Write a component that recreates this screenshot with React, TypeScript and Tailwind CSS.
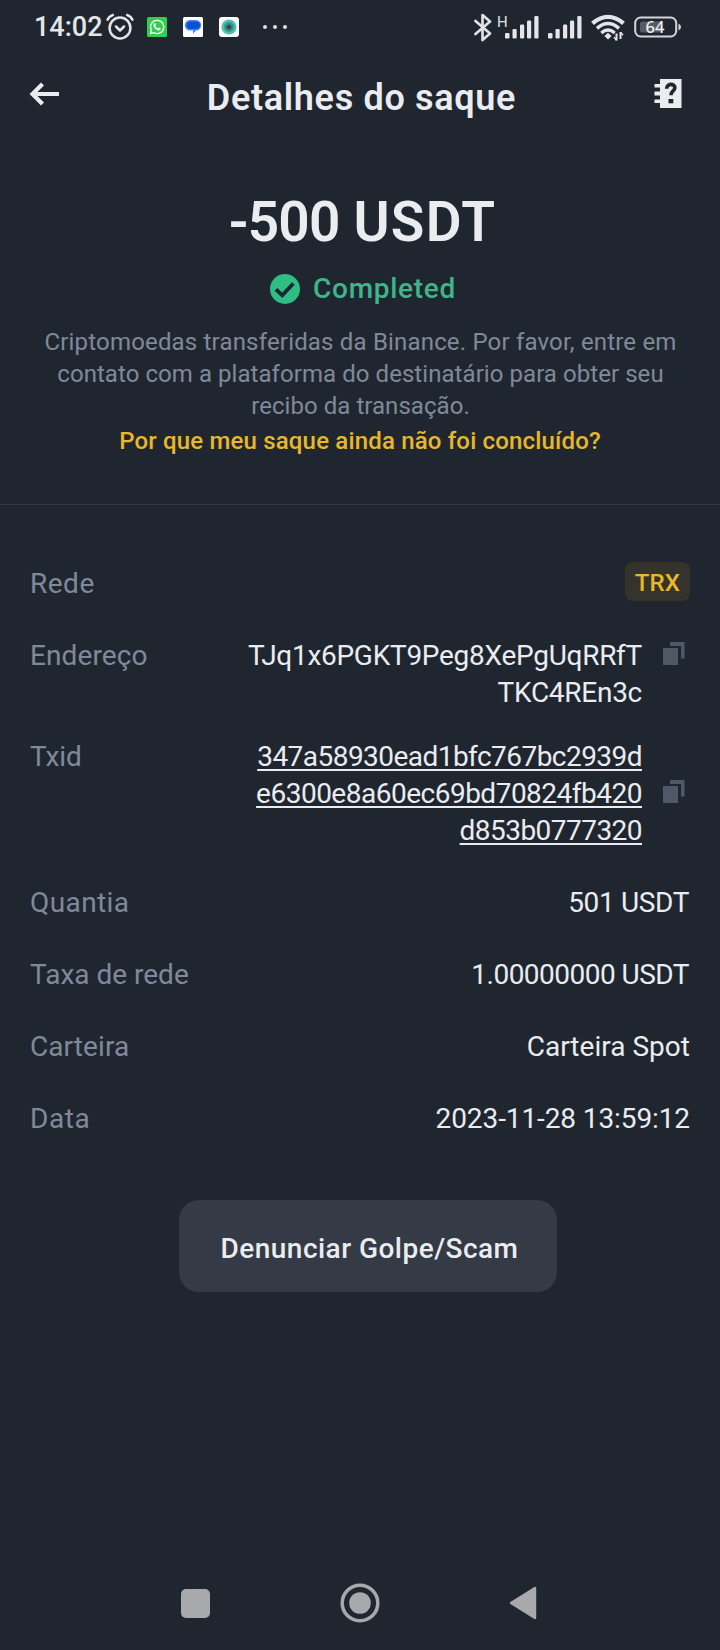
import React from "react";

function AlarmIcon() {
  return (
    <svg className="ml-[7px] h-7 w-7 shrink-0" viewBox="0 0 28 28" fill="none" stroke="#e4e5e8" strokeWidth="2.5" strokeLinecap="round">
      <circle cx="14" cy="15" r="10.4" />
      <path d="M10 13.5l4 4 4-4" strokeLinejoin="round" />
      <path d="M1.600 6.600Q3.200 3.400 6.800 2M26.400 6.600Q24.800 3.400 21.200 2" />
    </svg>
  );
}

function WhatsAppIcon() {
  return (
    <svg className="ml-[13px] h-5 w-5 shrink-0" viewBox="0 0 20 20">
      <rect width="20" height="20" rx="1.5" fill="#31ce51" />
      <path d="M3.4 16.7l1-3.5a6.6 6.6 0 1 1 2.5 2.5z" fill="none" stroke="#f4fff5" strokeWidth="1.3" strokeLinejoin="round" />
      <path d="M7.1 6.3c.4-.4 1-.3 1.2.1l.6 1.4c.1.4-.5.9-.6 1.2.5 1.1 1.4 1.9 2.5 2.4.4-.1.8-.9 1.2-.8l1.4.7c.6.3.2 1.4-.4 1.8-1.5.8-3.5-.1-4.7-1.3C7 10.6 5.8 8 7.1 6.3z" fill="#f4fff5" />
    </svg>
  );
}

function MessagesIcon() {
  return (
    <svg className="ml-4 h-5 w-5 shrink-0" viewBox="0 0 20 20">
      <rect width="20" height="20" rx="1.5" fill="#fff" />
      <path d="M7 3h6a4.8 4.8 0 0 1 0 10.5l-3 3.3V13.500H7A4.800 4.800 0 0 1 7 3z" fill="#4387f5" />
      <rect x="3.6" y="4.500" width="13.4" height="7.500" rx="3.700" fill="#0753d0" />
    </svg>
  );
}

function CameraIcon() {
  return (
    <svg className="ml-4 h-5 w-5 shrink-0" viewBox="0 0 20 20">
      <rect width="20" height="20" rx="3" fill="#fbfefd" />
      <circle cx="10" cy="10" r="7.6" fill="#55beb3" />
      <circle cx="10" cy="10" r="5" fill="#2f9990" />
      <circle cx="10" cy="10" r="2.6" fill="#285c60" />
      <circle cx="10" cy="10" r="1.4" fill="#5b3033" />
    </svg>
  );
}

function DotsIcon() {
  return (
    <svg className="ml-[23px] h-5 w-[26px] shrink-0" viewBox="0 0 26 20" fill="#dfe1e5">
      <circle cx="3" cy="10" r="2" />
      <circle cx="13" cy="10" r="2" />
      <circle cx="23" cy="10" r="2" />
    </svg>
  );
}

function BluetoothIcon() {
  return (
    <svg className="h-[29px] w-[18px] shrink-0" viewBox="0 0 18 28" fill="none" stroke="#dfe1e5" strokeWidth="2.7" strokeLinejoin="round" strokeLinecap="round">
      <path d="M1.5 7.5L16 20l-7.500 6.500v-25L16 8 1.500 20.500" />
    </svg>
  );
}

function SignalIcon() {
  return (
    <svg className="h-[23px] w-[34px] shrink-0" viewBox="0 0 34 23" fill="#e4e5e8">
      <rect x="0" y="17" width="4.5" height="5.5" rx="1.2" />
      <rect x="7.5" y="13" width="4.2" height="9.5" rx="1.2" />
      <rect x="15" y="8.5" width="4.2" height="14" rx="1.2" />
      <rect x="22" y="4.5" width="4.2" height="18" rx="1.2" />
      <rect x="29.3" y="0" width="4.2" height="22.5" rx="1.2" />
    </svg>
  );
}

function WifiIcon() {
  return (
    <svg className="ml-[9px] h-[28px] w-[34px] shrink-0" viewBox="0 0 34 28" fill="none" stroke="#e4e5e8">
      <path d="M1.5 10.3Q17-2.6 32.5 10.3" strokeWidth="4.3" />
      <path d="M6 15.3Q17 5.7 28 15.3" strokeWidth="3.6" />
      <path d="M10.3 20Q17 14.2 23.7 20" strokeWidth="3.4" />
      <path d="M17 19.700l3.600 3.300-3.600 3.400-3.600-3.400z" fill="#e4e5e8" stroke="none" />
      <path d="M25.500 20.500v7M29.500 19v7" strokeWidth="2" />
      <path d="M25.500 27.300l-2.500-3M29.500 19.200l2.500 3" strokeWidth="1.500" />
    </svg>
  );
}

function BatteryIcon() {
  return (
    <svg className="ml-[9px] h-[22px] w-[48px] shrink-0" viewBox="0 0 48 22">
      <rect x="1.200" y="1.500" width="41" height="19" rx="5.500" fill="none" stroke="#d3d5d9" strokeWidth="2" />
      <rect x="6" y="5.500" width="22" height="11" rx="2" fill="#565b64" />
      <path d="M44.500 7.500q2.500 1 2.500 3.500t-2.500 3.500z" fill="#d3d5d9" />
      <text x="21" y="16.800" textAnchor="middle" fill="#eceef1" fontSize="16.500" fontWeight="500" fontFamily="Noto Sans, sans-serif">64</text>
    </svg>
  );
}

function StatusBar() {
  return (
    <div className="flex h-[54px] items-center pr-[38px] pl-[34px]">
      <span className="h-8 w-[65px] text-[27px] leading-8 font-medium whitespace-nowrap text-[#e4e5e8]">14:02</span>
      <AlarmIcon />
      <WhatsAppIcon />
      <MessagesIcon />
      <CameraIcon />
      <DotsIcon />
      <div className="ml-auto flex items-center">
        <BluetoothIcon />
        <span className="mr-[-3px] ml-[5px] h-[36px] w-[11px] text-[15px] leading-[27px] text-[#dfe1e5]">H</span>
        <SignalIcon />
        <div className="w-[9px]" />
        <SignalIcon />
        <WifiIcon />
        <BatteryIcon />
      </div>
    </div>
  );
}

function BackIcon() {
  return (
    <svg className="-mt-px h-[24px] w-[31px] shrink-0" viewBox="0 0 31 24" fill="none" stroke="#eaecef" strokeWidth="4.200">
      <path d="M3 12H30M13.500 2L3.500 12l10 10" />
    </svg>
  );
}

function HelpBookIcon() {
  return (
    <svg className="-mt-px h-[29px] w-[28px] shrink-0" viewBox="0 0 28 29">
      <path d="M6 0h21.500v29H6v-5H.500v-3.500H6v-4H.500v-4H6v-4H.500V5H6z" fill="#eaecef" />
      <path d="M12.600 9.800c0-6 8.300-5.500 8.300-1 0 3.400-4 3-4 7.500" fill="none" stroke="#202630" strokeWidth="3.600" />
      <rect x="14.500" y="20" width="4.800" height="4.300" fill="#202630" />
    </svg>
  );
}

function CheckIcon() {
  return (
    <svg className="h-[30px] w-[30px] shrink-0" viewBox="0 0 30 30">
      <circle cx="15" cy="15" r="15" fill="#2ebd85" />
      <path d="M6 15.300l6.300 6L23.300 9.500" fill="none" stroke="#202630" strokeWidth="3.800" />
    </svg>
  );
}

function CopyIcon({ className }: { className: string }) {
  return (
    <svg className={`h-[23px] w-[22px] shrink-0 ${className}`} viewBox="0 0 22 23" fill="#4f5867">
      <path d="M0 6h15v17H0zM7 0h14.500v16.500H18V4H7z" />
    </svg>
  );
}

function Row({ label, labelClass, children }: { label: string; labelClass: string; children: React.ReactNode }) {
  return (
    <div className="flex justify-between">
      <span className={`text-[#808999] ${labelClass}`}>{label}</span>
      {children}
    </div>
  );
}

export default function App() {
  return (
    <div className="flex h-[1650px] w-[720px] flex-col overflow-hidden bg-[#202630] font-['Roboto',sans-serif] text-[#eaecef]">
      <StatusBar />

      <header className="flex h-20 items-center justify-between pr-[38px] pl-[29px]">
        <BackIcon />
        <h1 className="mt-[8px] ml-[9px] text-[36px] leading-[42px] font-semibold tracking-[0.68px] whitespace-nowrap">Detalhes do saque</h1>
        <HelpBookIcon />
      </header>

      <section className="flex h-[371px] flex-col items-center border-b border-[#343b47] pt-[56px]">
        <div className="ml-[5px] flex text-[55px] leading-[64px] font-semibold">
          <span className="tracking-[-0.9px]">-500</span>
          <span className="ml-[14px] tracking-[1.3px]">USDT</span>
        </div>
        <div className="mt-[15px] ml-[6px] flex h-10 items-center gap-[13px]">
          <CheckIcon />
          <span className="text-[28px] leading-10 font-medium tracking-[0.7px] text-[#3fb58a]">Completed</span>
        </div>
        <p className="mt-[17px] ml-px text-center text-2xl leading-8 whitespace-nowrap text-[#808999]">
          <span className="block tracking-[0.18px]">Criptomoedas transferidas da Binance. Por favor, entre em</span>
          <span className="block tracking-[0.06px]">contato com a plataforma do destinatário para obter seu</span>
          <span className="block tracking-[0.05px]">recibo da transação.</span>
        </p>
        <a className="mt-[3px] text-2xl leading-8 font-medium tracking-[0.17px] text-[#e8b72a]">Por que meu saque ainda não foi concluído?</a>
      </section>

      <section className="flex flex-col pt-[60px] pr-[30px] pl-[30px] text-[28px] leading-[37px] whitespace-nowrap">
        <div className="mb-[35px] h-[37px]">
          <Row label="Rede" labelClass="tracking-[0.5px]">
            <span className="-mt-[3px] h-[39px] w-[65px] rounded-lg bg-[#35332b] text-center text-2xl leading-[43px] font-medium tracking-[0.15px] text-[#e8b72a]">TRX</span>
          </Row>
        </div>
        <div className="mb-[27px]">
          <Row label="Endereço" labelClass="tracking-[0.1px]">
            <div className="flex">
              <div className="flex flex-col items-end">
                <span className="tracking-[-0.28px]">TJq1x6PGKT9Peg8XePgUqRRfT</span>
                <span className="tracking-[-0.27px]">TKC4REn3c</span>
              </div>
              <CopyIcon className="mt-[5px] mr-[5px] ml-[21px]" />
            </div>
          </Row>
        </div>
        <div className="mb-[35px]">
          <Row label="Txid" labelClass="tracking-[-0.1px]">
            <div className="flex">
              <div className="flex flex-col items-end underline decoration-2 underline-offset-[3px] [text-decoration-skip-ink:none]">
                <span className="tracking-[-0.54px]">347a58930ead1bfc767bc2939d</span>
                <span className="tracking-[-0.5px]">e6300e8a60ec69bd70824fb420</span>
                <span className="tracking-[-0.54px]">d853b0777320</span>
              </div>
              <CopyIcon className="mt-[42px] mr-[5px] ml-[21px]" />
            </div>
          </Row>
        </div>
        <div className="flex flex-col gap-[35px]">
          <Row label="Quantia" labelClass="tracking-[0.4px]">
            <span className="mr-px tracking-[-0.35px]">501 USDT</span>
          </Row>
          <Row label="Taxa de rede" labelClass="tracking-normal">
            <span className="mr-px tracking-[-0.52px]">1.00000000 USDT</span>
          </Row>
          <Row label="Carteira" labelClass="tracking-[0.08px]">
            <span className="tracking-[0.02px]">Carteira Spot</span>
          </Row>
          <Row label="Data" labelClass="tracking-[0.6px]">
            <span className="tracking-[-0.1px]">2023-11-28 13:59:12</span>
          </Row>
        </div>
      </section>

      <button className="mt-[63px] ml-[179px] flex h-[92px] w-[378px] shrink-0 items-center justify-center rounded-[20px] bg-[#343a46] pt-[5px] pl-[3px] text-[28px] font-medium tracking-[0.47px] whitespace-nowrap">
        Denunciar Golpe/Scam
      </button>

      <nav className="mt-auto mb-[27px] flex h-10 items-center justify-between pr-[183px] pl-[181px]">
        <div className="h-[29px] w-[29px] rounded-[5px] bg-[#a8a9ad]" />
        <svg className="h-10 w-10" viewBox="0 0 40 40">
          <circle cx="20" cy="20" r="17.800" fill="none" stroke="#a8a9ad" strokeWidth="3.500" />
          <circle cx="20" cy="20" r="10.800" fill="#a8a9ad" />
        </svg>
        <svg className="h-[34px] w-[28px]" viewBox="0 0 28 34">
          <path d="M2 17L26 2v30z" fill="#a8a9ad" stroke="#a8a9ad" strokeWidth="2.400" strokeLinejoin="round" />
        </svg>
      </nav>
    </div>
  );
}
